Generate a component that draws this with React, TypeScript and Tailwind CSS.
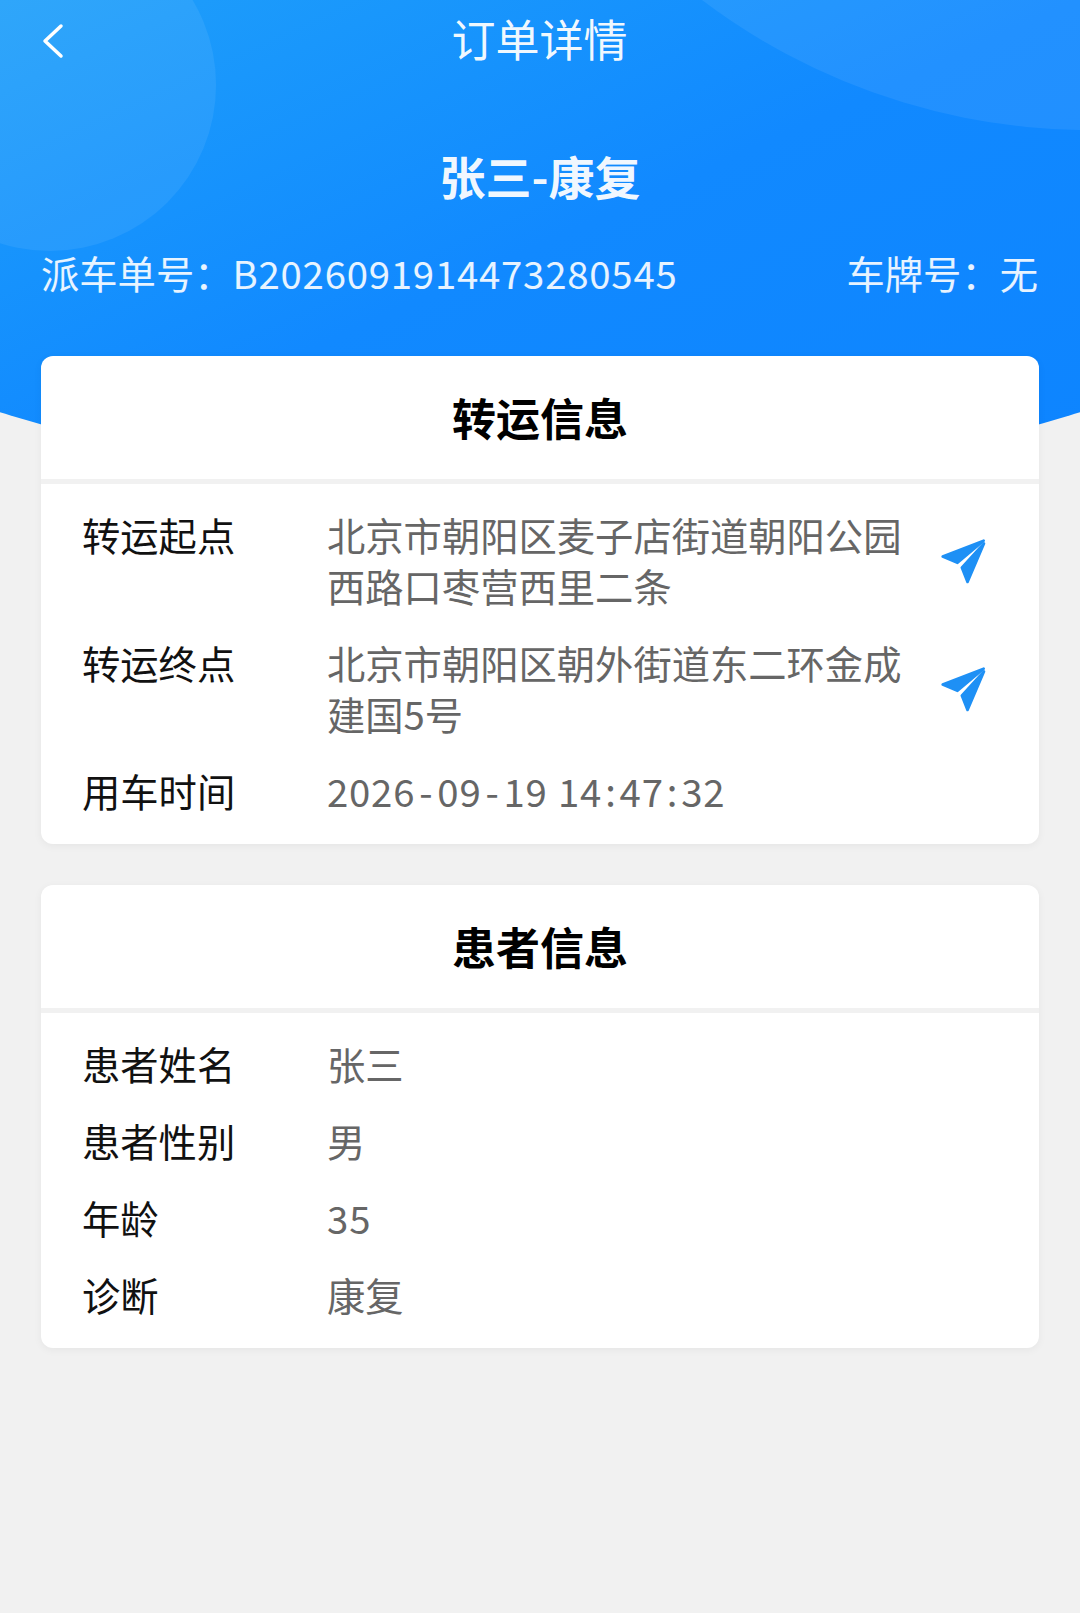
const PlaneIcon = () => (
  <svg viewBox="120 85 140 135" className="w-[47px] h-[46px] shrink-0" fill="#1e90f5" stroke="#1e90f5" strokeWidth="8" strokeLinejoin="round">
    <path d="M250 92 L128 139 L172 158 Z" />
    <path d="M251 100 L185 172 L202 215 Z" />
  </svg>
);

const Row = ({ label, value, nav }: { label: string; value: React.ReactNode; nav?: boolean }) => (
  <div className="flex items-center text-[38.3px] leading-[51px]">
    <div className="w-[245px] shrink-0 self-start text-[#111]">{label}</div>
    <div className="w-[578px] shrink-0 text-[#666]">{value}</div>
    {nav && (
      <div className="ml-[35px] mt-[1px]">
        <PlaneIcon />
      </div>
    )}
  </div>
);

const Card = ({ title, children }: { title: string; children: React.ReactNode }) => (
  <div className="bg-white rounded-[12px] shadow-[0_2px_8px_rgba(0,0,0,0.05)] overflow-hidden">
    <div className="h-[123px] pb-[2px] flex items-center justify-center text-[44px] font-bold text-black">{title}</div>
    <div className="h-[5px] bg-[#f1f1f1]"></div>
    <div className="pl-[41px] pr-[42px] pt-[25px] pb-[28px] flex flex-col gap-[26px]">{children}</div>
  </div>
);

export default function App() {
  return (
    <div className="relative w-[1080px] h-[1613px] overflow-hidden bg-[#f1f1f1] [font-family:'Noto_Sans_CJK_SC','Noto_Sans',sans-serif]">
      {/* 顶部蓝色背景 */}
      <div className="absolute top-0 left-0 w-[1080px] h-[490px] overflow-hidden bg-gradient-to-br from-[#1f9ffa] via-[#1189ff] to-[#0d84ff] [clip-path:circle(1824px_at_540px_-1330px)]">
        <div className="absolute left-[-116px] top-[-81px] w-[332px] h-[332px] rounded-full bg-white/[0.07]"></div>
        <div className="absolute left-[446px] top-[-1158px] w-[1288px] h-[1288px] rounded-full bg-white/[0.07]"></div>
      </div>

      <div className="relative">
        <div className="h-[76px] pl-[41px] pr-[42px] grid grid-cols-[1fr_auto_1fr] items-center">
          <svg viewBox="0 0 24 36" className="w-[24px] h-[36px] mt-[6px]" fill="none" stroke="white" strokeWidth="3.5" strokeLinecap="round" strokeLinejoin="round">
            <path d="M20 3 L4 18 L20 33" />
          </svg>
          <div className="text-[44px] leading-[60px] text-white/95">订单详情</div>
          <div></div>
        </div>

        <div className="mt-[69px] text-center text-[46px] leading-[60px] font-bold text-white/95">张三-康复</div>

        <div className="mt-[43px] pl-[41px] pr-[42px] flex justify-between text-[38.3px] leading-[50px] text-white/90">
          <div>
            派车单号：<span className="tracking-[0.8px]">B2026091914473280545</span>
          </div>
          <div>车牌号：无</div>
        </div>

        <div className="mt-[58px] px-[41px] flex flex-col gap-[41px]">
          <Card title="转运信息">
            <Row label="转运起点" value="北京市朝阳区麦子店街道朝阳公园西路口枣营西里二条" nav />
            <Row label="转运终点" value="北京市朝阳区朝外街道东二环金成建国5号" nav />
            <Row
              label="用车时间"
              value={
                <span className="tracking-[0.8px] [word-spacing:1px]">
                  2026<span className="mx-[4px]">-</span>09<span className="mx-[4px]">-</span>19 14<span className="mx-[3px]">:</span>47<span className="mx-[3px]">:</span>32
                </span>
              }
            />
          </Card>
          <Card title="患者信息">
            <Row label="患者姓名" value="张三" />
            <Row label="患者性别" value="男" />
            <Row label="年龄" value={<span className="tracking-[1px]">35</span>} />
            <Row label="诊断" value="康复" />
          </Card>
        </div>
      </div>
    </div>
  );
}
